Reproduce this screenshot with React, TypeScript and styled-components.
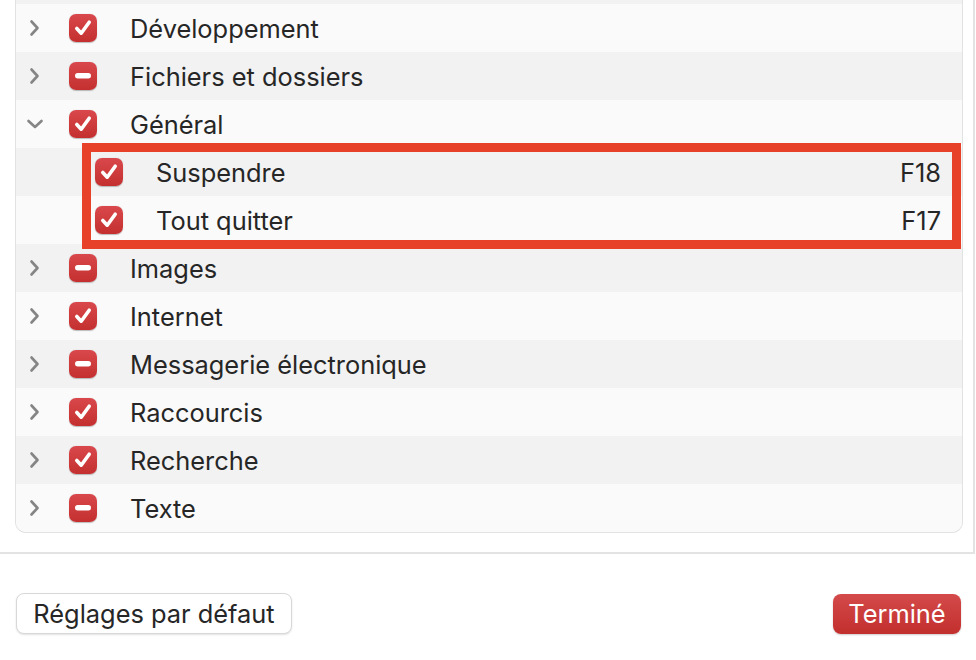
import styled, { createGlobalStyle } from "styled-components";

const GlobalStyle = createGlobalStyle`
  html, body {
    margin: 0;
    padding: 0;
    background: #ffffff;
  }
  body {
    font-family: Inter, "Noto Sans", "Liberation Sans", sans-serif;
    color: #262626;
    -webkit-font-smoothing: antialiased;
  }
`;

const Page = styled.div`
  width: 976px;
  height: 660px;
  overflow: hidden;
  background: #ffffff;
`;

const Panel = styled.div`
  width: 975px;
  height: 554px;
  border-right: 2px solid #e3e3e3;
  border-bottom: 2px solid #e3e3e3;
  padding: 0 11px 0 16px;
  box-sizing: border-box;
  overflow: hidden;
`;

const List = styled.div`
  position: relative;
  border: 1px solid #e2e2e2;
  border-top: none;
  border-radius: 0 0 11px 11px;
  overflow: hidden;
  margin-left: -1px;
  margin-right: -1px;
`;

/* the row above, scrolled out of view except for its last pixels */
const RowEdge = styled.div`
  height: 4px;
  background: #f2f2f2;
`;

const Row = styled.div<{ $dark: boolean }>`
  height: 48px;
  display: flex;
  align-items: center;
  background: ${(p) => (p.$dark ? "#f2f2f2" : "#fafafa")};
`;

const ChevronCell = styled.div`
  width: 53px;
  padding-left: 10px;
  box-sizing: border-box;
  display: flex;
  align-items: center;
`;

const Indent = styled.div`
  width: 26px;
`;

const Box = styled.div`
  width: 28px;
  height: 28px;
  border-radius: 7px;
  background: linear-gradient(#d9484c, #c4302f);
  box-shadow: 0 0.5px 1px rgba(0, 0, 0, 0.25);
  display: flex;
  align-items: center;
  justify-content: center;
  flex-shrink: 0;
`;

const Label = styled.div`
  margin-left: 33px;
  font-size: 25.4px;
  flex: 1;
  white-space: nowrap;
  padding-top: 1px;
`;

const Shortcut = styled.div`
  font-size: 25.4px;
  margin-right: 21px;
  padding-top: 1px;
`;

const Highlight = styled.div`
  position: absolute;
  left: 66px;
  top: 143px;
  width: 879px;
  height: 106px;
  border: 9px solid #e8412a;
  box-sizing: border-box;
  pointer-events: none;
`;

const Footer = styled.div`
  display: flex;
  justify-content: space-between;
  align-items: center;
  padding: 39px 15px 0 16px;
`;

const PlainButton = styled.button`
  height: 41px;
  width: 276px;
  border-radius: 8px;
  border: 1px solid #d8d8d8;
  background: #ffffff;
  box-shadow: 0 1px 2px rgba(0, 0, 0, 0.12);
  font-family: inherit;
  font-size: 25.4px;
  color: #262626;
  padding: 0;
`;

const PrimaryButton = styled.button`
  height: 40px;
  width: 128px;
  border-radius: 8px;
  border: none;
  background: linear-gradient(#d44a4b, #c22f2d);
  box-shadow: 0 1px 2px rgba(0, 0, 0, 0.2);
  font-family: inherit;
  font-size: 25.4px;
  color: #ffffff;
  padding: 0;
`;

function Chevron({ open }: { open?: boolean }) {
  return open ? (
    <svg width="18" height="12" viewBox="0 0 18 12">
      <path d="M2.5 3 L9 9 L15.5 3" fill="none" stroke="#858585" strokeWidth="2.6" strokeLinecap="round" strokeLinejoin="round" />
    </svg>
  ) : (
    <svg width="18" height="18" viewBox="0 0 18 18">
      <path d="M5.5 2.5 L11.5 9 L5.5 15.5" fill="none" stroke="#858585" strokeWidth="2.6" strokeLinecap="round" strokeLinejoin="round" />
    </svg>
  );
}

function Check({ mixed }: { mixed?: boolean }) {
  return (
    <Box>
      {mixed ? (
        <svg width="18" height="8" viewBox="0 0 18 8">
          <rect x="1" y="1" width="16" height="5.5" rx="2.75" fill="#ffffff" />
        </svg>
      ) : (
        <svg width="20" height="20" viewBox="0 0 20 20">
          <path d="M3.8 10.5 L8.2 15.2 L16.2 4.2" fill="none" stroke="#ffffff" strokeWidth="3.6" strokeLinecap="round" strokeLinejoin="round" />
        </svg>
      )}
    </Box>
  );
}

type Item = {
  label: string;
  mixed?: boolean;
  open?: boolean;
  child?: boolean;
  key?: string;
};

const items: Item[] = [
  { label: "Développement" },
  { label: "Fichiers et dossiers", mixed: true },
  { label: "Général", open: true },
  { label: "Suspendre", child: true, key: "F18" },
  { label: "Tout quitter", child: true, key: "F17" },
  { label: "Images", mixed: true },
  { label: "Internet" },
  { label: "Messagerie électronique", mixed: true },
  { label: "Raccourcis" },
  { label: "Recherche" },
  { label: "Texte", mixed: true },
];

export default function App() {
  return (
    <Page>
      <GlobalStyle />
      <Panel>
        <List>
          <RowEdge />
          {items.map((it, i) => (
            <Row key={it.label} $dark={i % 2 === 1}>
              <ChevronCell>{!it.child && <Chevron open={it.open} />}</ChevronCell>
              {it.child && <Indent />}
              <Check mixed={it.mixed} />
              <Label>{it.label}</Label>
              {it.key && <Shortcut>{it.key}</Shortcut>}
            </Row>
          ))}
          <Highlight />
        </List>
      </Panel>
      <Footer>
        <PlainButton>Réglages par défaut</PlainButton>
        <PrimaryButton>Terminé</PrimaryButton>
      </Footer>
    </Page>
  );
}
